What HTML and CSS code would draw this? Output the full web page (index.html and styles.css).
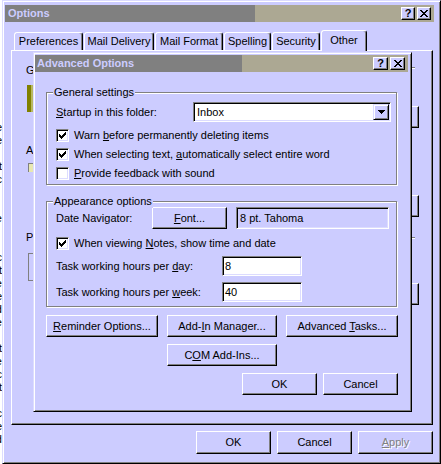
FILE: index.html
```html
<!DOCTYPE html>
<html>
<head>
<meta charset="utf-8">
<title>Options</title>
<link rel="stylesheet" href="styles.css">
</head>
<body>
<div class="desk">
  <div class="strip">
    <div>the</div><div>more</div><div></div><div>et</div><div>ac</div><div></div><div></div><div>de</div><div></div><div></div><div>ic</div><div>it</div><div>ne</div><div>se</div><div>ed</div><div>ne</div><div></div><div>it</div><div>ne</div><div>ic</div><div>at</div><div></div><div>ic</div><div>se</div><div>ad</div>
  </div>
  <div class="win">
    <div class="caption main-cap">
      <span class="cap-text">Options</span>
      <span class="cap-btns">
        <span class="cbtn">?</span>
        <span class="cbtn"><svg width="8" height="7" viewBox="0 0 8 7" shape-rendering="crispEdges"><path d="M0 0h2v1H0zM6 0h2v1H6zM1 1h2v1H1zM5 1h2v1H5zM2 2h4v1H2zM3 3h2v1H3zM2 4h4v1H2zM1 5h2v1H1zM5 5h2v1H5zM0 6h2v1H0zM6 6h2v1H6z" fill="#000"/></svg></span>
      </span>
    </div>

    <div class="tabs">
      <div class="tab t-pref">Preferences</div>
      <div class="tab t-deliv">Mail Delivery</div>
      <div class="tab t-format">Mail Format</div>
      <div class="tab t-spell">Spelling</div>
      <div class="tab t-sec">Security</div>
      <div class="tab active t-other">Other</div>
    </div>

    <div class="panel">
      <div class="sect-head"><span>General</span><i class="etch etch-1"></i></div>
      <div class="sect-body s1"><span class="olive-icon"></span><span class="btn hid-btn"><span>Advanced Options...</span></span></div>
      <div class="sect-head s2h"><span>AutoArchive</span></div>
      <div class="sect-body s2"><span class="mini-icon"></span><span class="btn hid-btn"><span>AutoArchive...</span></span></div>
      <div class="sect-head s3h"><span>Preview Pane</span><i class="etch etch-3"></i></div>
      <div class="sect-body s3"><span class="bracket"></span><span class="btn hid-btn"><span>Preview Pane...</span></span></div>
    </div>

    <div class="footer">
      <span class="btn fbtn"><span>OK</span></span>
      <span class="btn fbtn"><span>Cancel</span></span>
      <span class="btn fbtn disabled"><span><u>A</u>pply</span></span>
    </div>

    <div class="dlg">
      <div class="caption dlg-cap">
        <span class="cap-text">Advanced Options</span>
        <span class="cap-btns dlg-btns">
          <span class="cbtn">?</span>
          <span class="cbtn"><svg width="8" height="7" viewBox="0 0 8 7" shape-rendering="crispEdges"><path d="M0 0h2v1H0zM6 0h2v1H6zM1 1h2v1H1zM5 1h2v1H5zM2 2h4v1H2zM3 3h2v1H3zM2 4h4v1H2zM1 5h2v1H1zM5 5h2v1H5zM0 6h2v1H0zM6 6h2v1H6z" fill="#000"/></svg></span>
        </span>
      </div>
      <div class="dlg-body">
        <div class="group g1">
          <span class="legend">General settings</span>
          <div class="row-combo">
            <span><u>S</u>tartup in this folder:</span>
            <span class="combo"><span class="combo-text">Inbox</span><span class="drop"><svg width="7" height="4" viewBox="0 0 7 4" shape-rendering="crispEdges"><path d="M0 0h7v1H0zM1 1h5v1H1zM2 2h3v1H2zM3 3h1v1H3z" fill="#000"/></svg></span></span>
          </div>
          <div class="check-row first">
            <span class="cb"><svg width="11" height="11" viewBox="0 0 11 11" shape-rendering="crispEdges"><path d="M2 4h1v1h1v1h1V5h1V4h1V3h1V2h1v3H8v1H7v1H6v1H5v1H4V8H3V7H2z" fill="#000"/></svg></span>
            <span class="cb-label">Warn <u>b</u>efore permanently deleting items</span>
          </div>
          <div class="check-row">
            <span class="cb"><svg width="11" height="11" viewBox="0 0 11 11" shape-rendering="crispEdges"><path d="M2 4h1v1h1v1h1V5h1V4h1V3h1V2h1v3H8v1H7v1H6v1H5v1H4V8H3V7H2z" fill="#000"/></svg></span>
            <span class="cb-label">When selecting text, <u>a</u>utomatically select entire word</span>
          </div>
          <div class="check-row">
            <span class="cb"></span>
            <span class="cb-label"><u>P</u>rovide feedback with sound</span>
          </div>
        </div>

        <div class="group g2">
          <span class="legend">Appearance options</span>
          <div class="row-date">
            <span class="date-label">Date Navigator:</span>
            <span class="btn font-btn"><span><u>F</u>ont...</span></span>
            <span class="static">8 pt. Tahoma</span>
          </div>
          <div class="check-row notes">
            <span class="cb"><svg width="11" height="11" viewBox="0 0 11 11" shape-rendering="crispEdges"><path d="M2 4h1v1h1v1h1V5h1V4h1V3h1V2h1v3H8v1H7v1H6v1H5v1H4V8H3V7H2z" fill="#000"/></svg></span>
            <span class="cb-label">When viewing <u>N</u>otes, show time and date</span>
          </div>
          <div class="row-input">
            <span class="input-label">Task working hours per <u>d</u>ay:</span>
            <span class="input">8</span>
          </div>
          <div class="row-input">
            <span class="input-label">Task working hours per <u>w</u>eek:</span>
            <span class="input">40</span>
          </div>
        </div>

        <div class="btn-row">
          <span class="btn w112"><span><u>R</u>eminder Options...</span></span>
          <span class="btn w110"><span>Add-<u>I</u>n Manager...</span></span>
          <span class="btn w112"><span>Advanced <u>T</u>asks...</span></span>
        </div>
        <div class="btn-row com-row">
          <span class="btn w110"><span>C<u>O</u>M Add-Ins...</span></span>
        </div>
        <div class="btn-row ok-row">
          <span class="btn w75"><span>OK</span></span>
          <span class="btn w75"><span>Cancel</span></span>
        </div>
      </div>
    </div>
  </div>
</div>
</body>
</html>
```

FILE: styles.css
```css
* { box-sizing: border-box; }

body {
  margin: 0;
  background: #ffffff;
  font-family: "Liberation Sans", Arial, sans-serif;
  font-size: 11px;
  line-height: 13px;
  color: #000;
}

u { text-decoration: underline; text-underline-offset: 1px; }

.desk {
  display: flex;
  width: 441px;
  height: 464px;
  overflow: hidden;
}

.strip {
  width: 2px;
  flex: none;
  overflow: hidden;
  background: #fff;
  padding-top: 121px;
  direction: rtl;
  white-space: nowrap;
}
.strip div { height: 13px; }

.win {
  position: relative;
  width: 439px;
  height: 464px;
  flex: none;
  border: 1px solid;
  border-color: #dcdcff #000 #000 #dcdcff;
  box-shadow: inset 1px 1px 0 #fff, inset -1px -1px 0 #808080;
  background: #ccccff;
  padding: 4px 6px 0 2px;
  display: flex;
  flex-direction: column;
}

/* captions */
.caption {
  height: 17px;
  display: flex;
  align-items: center;
  color: #ccccff;
  font-weight: bold;
  flex: none;
}
.main-cap {
  background: linear-gradient(to right, #808080 0, #808080 250px, #aca893 250px);
  padding: 0 3px 0 3px;
}
.dlg-cap {
  background: linear-gradient(to right, #808080 0, #808080 207px, #aca893 207px);
  padding: 0 3px 0 2px;
}
.cap-text { white-space: nowrap; }
.cap-btns {
  margin-left: auto;
  display: flex;
  gap: 2px;
}
.cbtn {
  width: 14px;
  height: 13px;
  background: #ccccff;
  border: 1px solid;
  border-color: #fff #000 #000 #fff;
  box-shadow: inset -1px -1px 0 #808080;
  display: flex;
  align-items: center;
  justify-content: center;
  color: #000;
  font-weight: bold;
  font-size: 11px;
  line-height: 11px;
  padding-bottom: 1px;
}
.dlg-btns .cbtn { width: 15px; }

/* tabs */
.tabs {
  display: flex;
  align-items: flex-end;
  height: 20px;
  margin-top: 8px;
  padding-left: 9px;
  flex: none;
}
.tab {
  height: 18px;
  border: 1px solid;
  border-bottom: none;
  border-color: #fff #000 transparent #fff;
  border-radius: 3px 3px 0 0;
  box-shadow: inset -1px 0 0 #808080;
  display: flex;
  align-items: center;
  justify-content: center;
  margin-right: 1px;
  white-space: nowrap;
  background: #ccccff;
}
.tab.active {
  height: 21px;
  margin-bottom: -1px;
  position: relative;
  z-index: 1;
  padding-bottom: 2px;
}
.t-pref { width: 69px; }
.t-deliv { width: 70px; }
.t-format { width: 68px; }
.t-spell { width: 47px; }
.t-sec { width: 48px; }
.t-other { width: 46px; }

/* tab panel */
.panel {
  margin-left: 6px;
  width: 422px;
  height: 375px;
  flex: none;
  border: 1px solid;
  border-color: #fff #000 #000 #fff;
  box-shadow: inset -1px -1px 0 #808080;
  padding: 13px 13px 0 14px;
  display: flex;
  flex-direction: column;
}
.sect-head {
  height: 13px;
  display: flex;
  align-items: flex-start;
  white-space: nowrap;
}
.etch {
  flex: 1;
  height: 2px;
  border-top: 1px solid #808080;
  border-bottom: 1px solid #fff;
  margin: 3px 4px 0 4px;
}
.etch-3 { margin-top: 6px; }
.sect-body {
  display: flex;
  justify-content: space-between;
  align-items: flex-start;
}
.sect-body .hid-btn { align-self: flex-end; width: 120px; height: 22px; }
.s1 { margin-top: 8px; height: 43px; }
.s2h { margin-top: 16px; }
.s2 { margin-top: 6px; height: 54px; }
.s3h { margin-top: 14px; }
.s3 { margin-top: 9px; height: 52px; }
.olive-icon {
  width: 6px;
  height: 27px;
  margin-left: 1px;
  background: #808000;
  border-right: 2px solid #b8b860;
}
.mini-icon {
  width: 5px;
  height: 9px;
  margin-left: 2px;
  background: #e8e8b0;
  border-left: 1px solid #808080;
  border-top: 1px solid #808080;
}
.bracket {
  width: 10px;
  height: 28px;
  margin-left: 2px;
  border: 1px solid #808080;
  border-right: none;
}

/* buttons */
.btn {
  display: flex;
  align-items: center;
  justify-content: center;
  height: 22px;
  background: #ccccff;
  border: 1px solid;
  border-color: #fff #000 #000 #fff;
  box-shadow: inset -1px -1px 0 #808080;
  white-space: nowrap;
  flex: none;
}
.footer {
  display: flex;
  justify-content: flex-end;
  gap: 6px;
  margin-top: 6px;
  padding-right: 1px;
}
.fbtn { width: 75px; height: 23px; }
.disabled { color: #808080; text-shadow: 1px 1px 0 #fff; }
.disabled u { text-decoration-color: #808080; }

/* advanced options dialog */
.dlg {
  position: absolute;
  left: 30px;
  top: 51px;
  width: 379px;
  border: 1px solid;
  border-color: #dcdcff #000 #000 #dcdcff;
  box-shadow: inset 1px 1px 0 #fff, inset -1px -1px 0 #808080;
  background: #ccccff;
  padding: 2px 3px 3px 1px;
}
.dlg-body {
  padding: 20px 11px 13px 11px;
  display: flex;
  flex-direction: column;
}

.group {
  position: relative;
  border: 1px solid #808080;
  box-shadow: inset 1px 1px 0 #fff, 1px 1px 0 #fff;
  display: flex;
  flex-direction: column;
}
.legend {
  position: absolute;
  top: -7px;
  left: 6px;
  padding: 0 1px;
  background: #ccccff;
  white-space: nowrap;
}
.g1 { padding: 9px 5px 4px 9px; }
.g2 { margin-top: 16px; padding: 5px 7px 4px 9px; }

.row-combo {
  display: flex;
  align-items: center;
  justify-content: space-between;
  height: 20px;
}
.combo {
  width: 198px;
  height: 20px;
  border: 1px solid;
  border-color: #808080 #fff #fff #808080;
  box-shadow: inset 1px 1px 0 #000, inset -1px -1px 0 #dcdcff;
  background: #fff;
  display: flex;
  align-items: center;
  padding: 1px 1px 1px 1px;
}
.combo-text { flex: 1; padding-left: 2px; }
.drop {
  width: 16px;
  height: 16px;
  background: #ccccff;
  border: 1px solid;
  border-color: #dcdcff #000 #000 #dcdcff;
  box-shadow: inset 1px 1px 0 #fff, inset -1px -1px 0 #808080;
  display: flex;
  align-items: center;
  justify-content: center;
}

.check-row {
  display: flex;
  align-items: center;
  height: 13px;
  margin-top: 6px;
}
.check-row.first { margin-top: 7px; }
.check-row.notes { margin-top: 8px; }
.cb {
  width: 13px;
  height: 13px;
  flex: none;
  border: 1px solid;
  border-color: #808080 #fff #fff #808080;
  box-shadow: inset 1px 1px 0 #000, inset -1px -1px 0 #dcdcff;
  background: #fff;
}
.cb svg { display: block; }
.cb-label { margin-left: 5px; white-space: nowrap; }

.row-date {
  display: flex;
  align-items: center;
  height: 22px;
}
.date-label { width: 96px; white-space: nowrap; }
.font-btn { width: 75px; }
.static {
  width: 153px;
  height: 22px;
  margin-left: 9px;
  border: 1px solid;
  border-color: #808080 #fff #fff #808080;
  box-shadow: inset 1px 1px 0 #000, inset -1px -1px 0 #dcdcff;
  display: flex;
  align-items: center;
  padding-left: 3px;
  white-space: nowrap;
}

.row-input {
  display: flex;
  align-items: center;
  height: 20px;
  margin-top: 6px;
}
.input-label { width: 166px; white-space: nowrap; }
.input {
  width: 80px;
  height: 20px;
  border: 1px solid;
  border-color: #808080 #fff #fff #808080;
  box-shadow: inset 1px 1px 0 #000, inset -1px -1px 0 #dcdcff;
  background: #fff;
  display: flex;
  align-items: center;
  padding-left: 2px;
}

.btn-row {
  display: flex;
  gap: 9px;
  margin-top: 8px;
}
.com-row { margin-top: 7px; padding-left: 121px; }
.ok-row { margin-top: 7px; justify-content: flex-end; gap: 6px; margin-right: -1px; }
.w112 { width: 112px; }
.w110 { width: 110px; }
.w75 { width: 75px; }
```
